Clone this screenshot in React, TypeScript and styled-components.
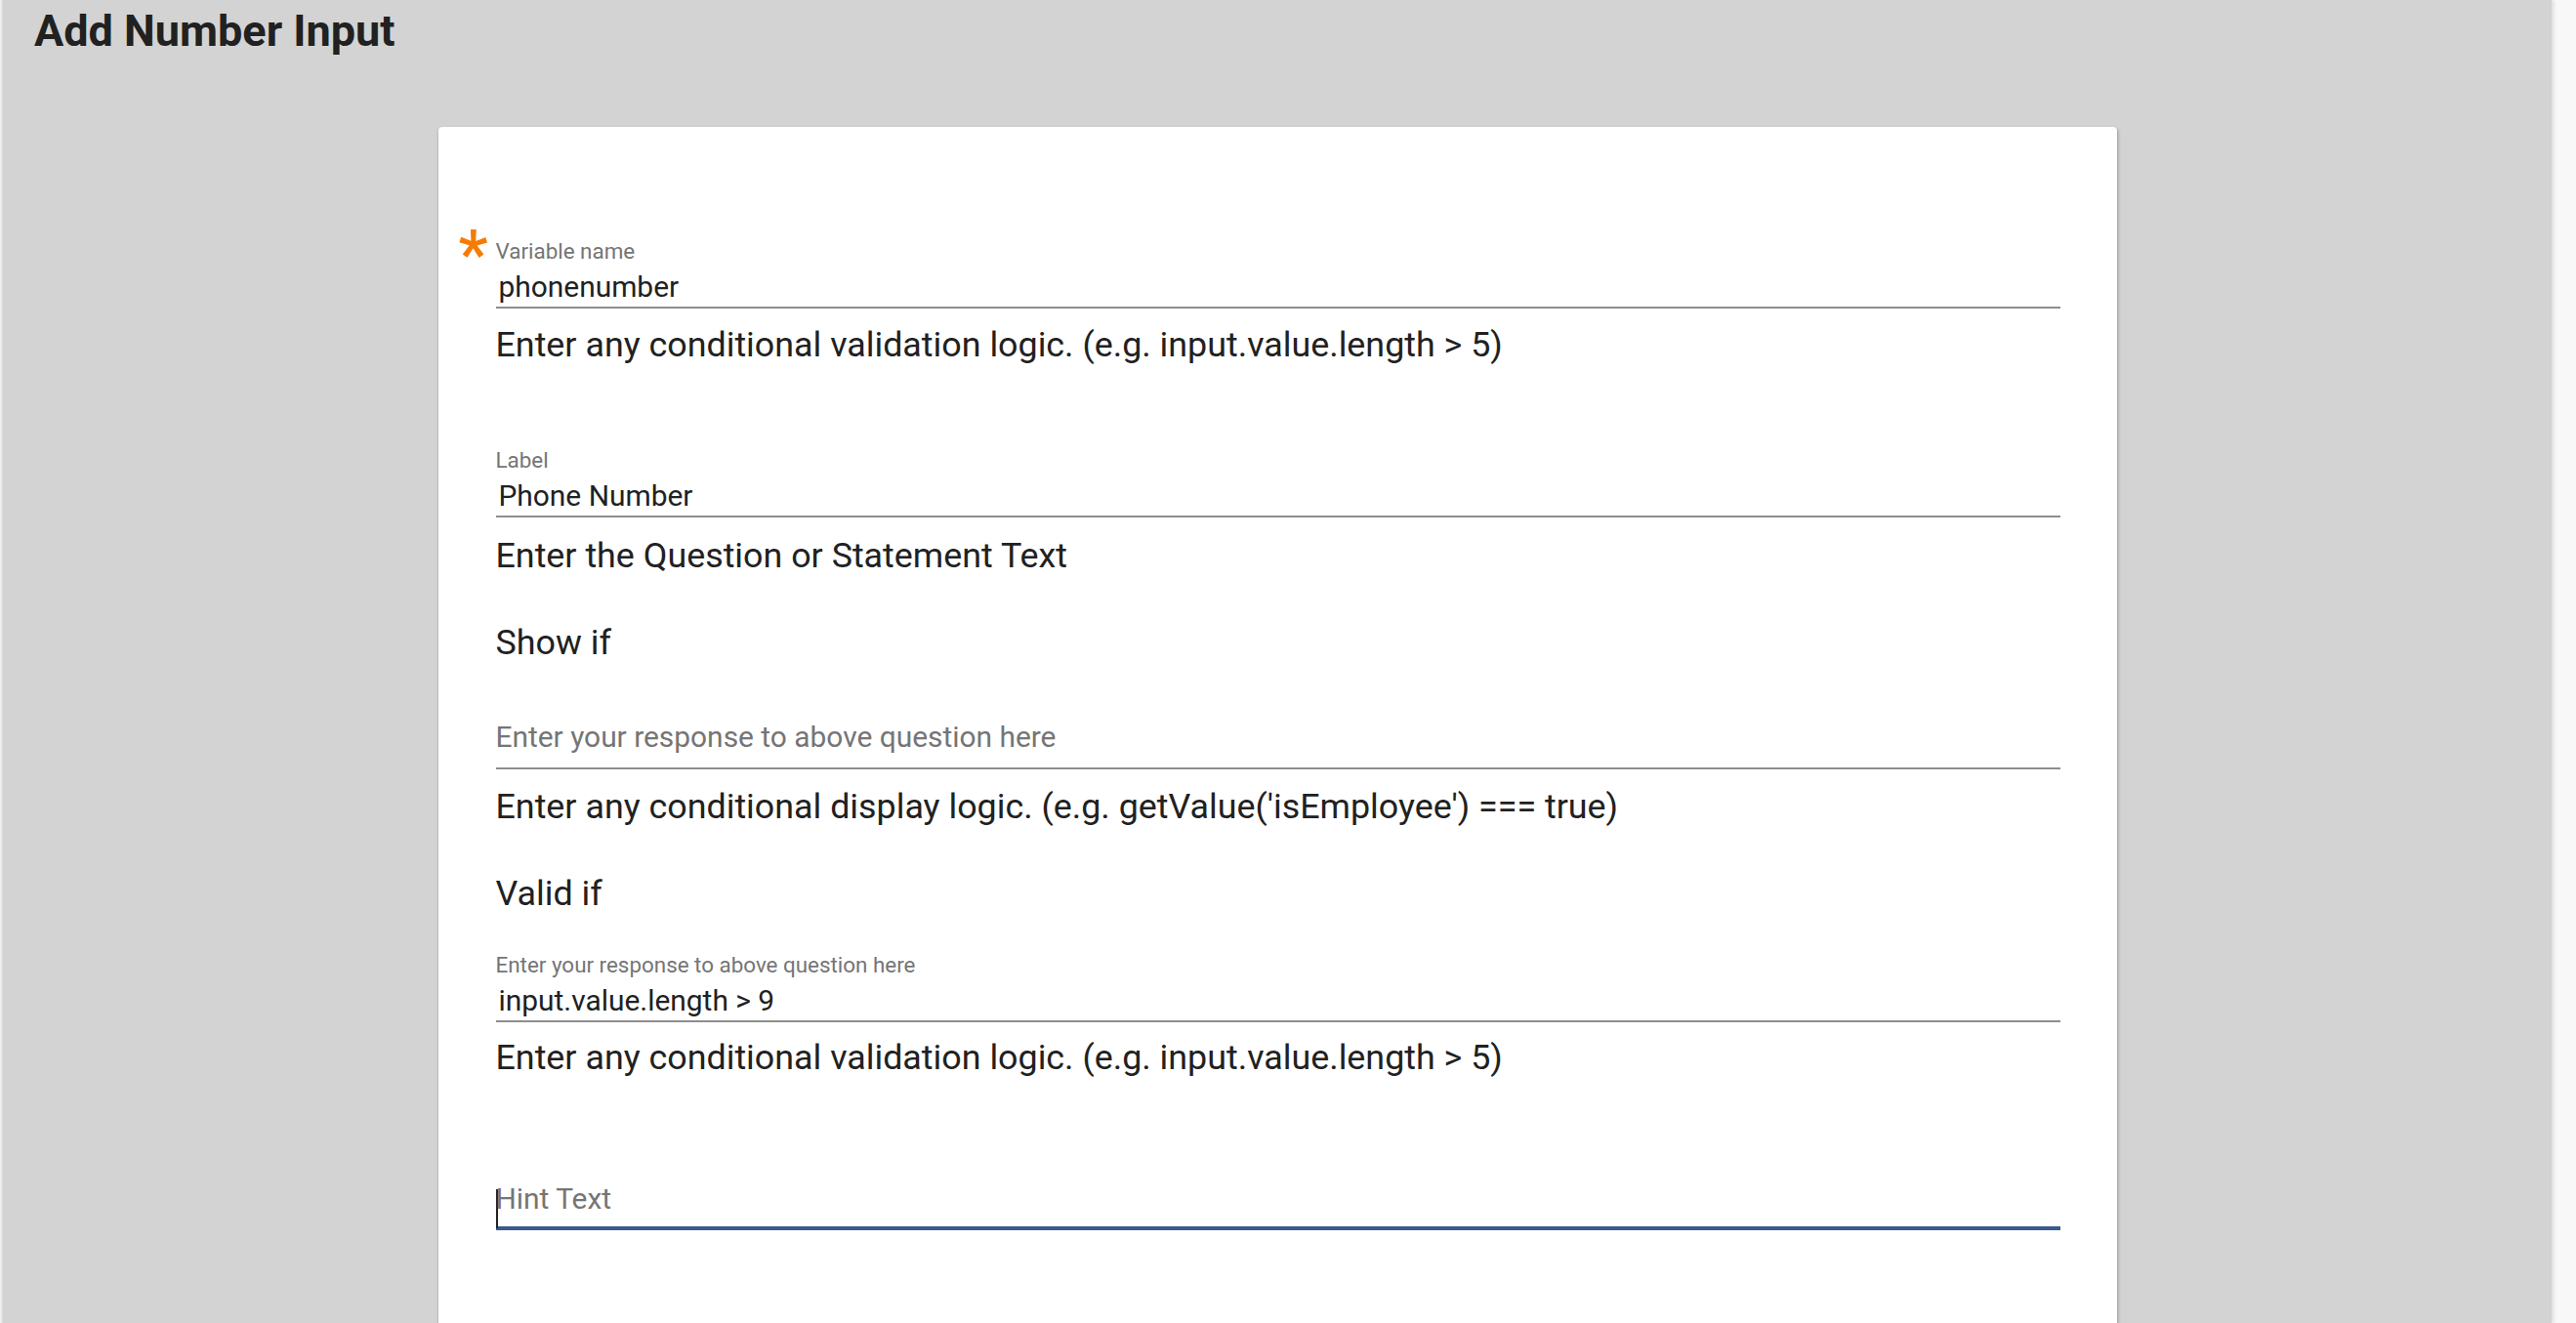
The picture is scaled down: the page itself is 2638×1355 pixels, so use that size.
import React from "react";
import styled, { createGlobalStyle } from "styled-components";

const Global = createGlobalStyle`
  html, body { margin: 0; padding: 0; }
  body {
    background: #f8f8f8;
    font-family: Roboto, "Liberation Sans", Arial, sans-serif;
    overflow: hidden;
  }
`;

const Page = styled.div`
  display: flex;
  height: 1355px;
  width: 2638px;
  overflow: hidden;
  background: #f8f8f8;
`;

const LeftEdge = styled.div`
  width: 3px;
  background: linear-gradient(to right, #f4f4f4, #dcdcdc);
  flex-shrink: 0;
`;

const Main = styled.main`
  flex: 1;
  background: #d3d3d3;
  box-shadow: 2px 0 4px rgba(0, 0, 0, 0.12);
  display: flex;
  flex-direction: column;
  overflow: hidden;
  position: relative;
  z-index: 1;
`;

const RightEdge = styled.div`
  width: 25px;
  flex-shrink: 0;
  background: #f8f8f8;
`;

const Title = styled.h1`
  margin: 0;
  padding: 5px 0 0 32px;
  font-size: 45px;
  line-height: 54px;
  font-weight: 700;
  color: #212121;
`;

const Card = styled.section`
  align-self: center;
  width: 1719px;
  margin-top: 71px;
  min-height: 1400px;
  background: #ffffff;
  border-radius: 4px;
  box-shadow: 0 1px 3px rgba(0, 0, 0, 0.2), 0 1px 1px rgba(0, 0, 0, 0.14),
    2px 2px 3px rgba(0, 0, 0, 0.12);
  padding: 114px 58px 0 59px;
  box-sizing: border-box;
  display: flex;
  flex-direction: column;
`;

const Field = styled.div<{ $mt?: number }>`
  position: relative;
  display: flex;
  flex-direction: column;
  margin-top: ${(p) => p.$mt ?? 0}px;
`;

const Required = styled.span`
  position: absolute;
  left: -38px;
  top: -17px;
  font-size: 68px;
  line-height: 68px;
  color: #f57c00;
  font-weight: 500;
`;

const Label = styled.label`
  font-size: 22.4px;
  line-height: 26px;
  color: #757575;
  margin-bottom: 6px;
`;

const InputLine = styled.div<{ $pb: number; $focused?: boolean; $placeholder?: boolean; $indent?: number }>`
  display: flex;
  align-items: center;
  font-size: 29.9px;
  line-height: 36px;
  height: 36px;
  padding-left: ${(p) => p.$indent ?? 0}px;
  padding-bottom: ${(p) => p.$pb}px;
  color: ${(p) => (p.$placeholder ? "#757575" : "#212121")};
  border-bottom: ${(p) => (p.$focused ? "4px solid #3a5a8c" : "2px solid #8e8e8e")};
`;

const Caret = styled.span`
  display: inline-block;
  width: 2px;
  height: 40px;
  background: #222;
  margin-right: -2px;
  align-self: flex-end;
  margin-bottom: -12px;
`;

const Helper = styled.p<{ $mt?: number }>`
  margin: ${(p) => p.$mt ?? 16}px 0 0 0;
  font-size: 35.85px;
  line-height: 42px;
  color: #212121;
`;

const Heading = styled.h3<{ $mt: number }>`
  margin: ${(p) => p.$mt}px 0 0 0;
  font-size: 35.85px;
  line-height: 42px;
  font-weight: 400;
  color: #212121;
`;

export default function App() {
  return (
    <>
      <Global />
      <Page>
        <LeftEdge />
        <Main>
          <Title>Add Number Input</Title>
          <Card>
            <Field>
              <Required>*</Required>
              <Label>Variable name</Label>
              <InputLine $pb={2} $indent={3}>phonenumber</InputLine>
            </Field>
            <Helper>Enter any conditional validation logic. (e.g. input.value.length &gt; 5)</Helper>

            <Field $mt={84}>
              <Label>Label</Label>
              <InputLine $pb={2} $indent={3}>Phone Number</InputLine>
            </Field>
            <Helper $mt={18}>Enter the Question or Statement Text</Helper>

            <Heading $mt={47}>Show if</Heading>
            <Field $mt={58}>
              <InputLine $pb={13} $placeholder>Enter your response to above question here</InputLine>
            </Field>
            <Helper $mt={17}>Enter any conditional display logic. (e.g. getValue('isEmployee') === true)</Helper>

            <Heading $mt={47}>Valid if</Heading>
            <Field $mt={39}>
              <Label>Enter your response to above question here</Label>
              <InputLine $pb={2} $indent={3}>input.value.length &gt; 9</InputLine>
            </Field>
            <Helper $mt={15}>Enter any conditional validation logic. (e.g. input.value.length &gt; 5)</Helper>

            <Field $mt={106}>
              <InputLine $pb={10} $placeholder $focused $indent={0}>
                <Caret />
                Hint Text
              </InputLine>
            </Field>
          </Card>
        </Main>
        <RightEdge />
      </Page>
    </>
  );
}
